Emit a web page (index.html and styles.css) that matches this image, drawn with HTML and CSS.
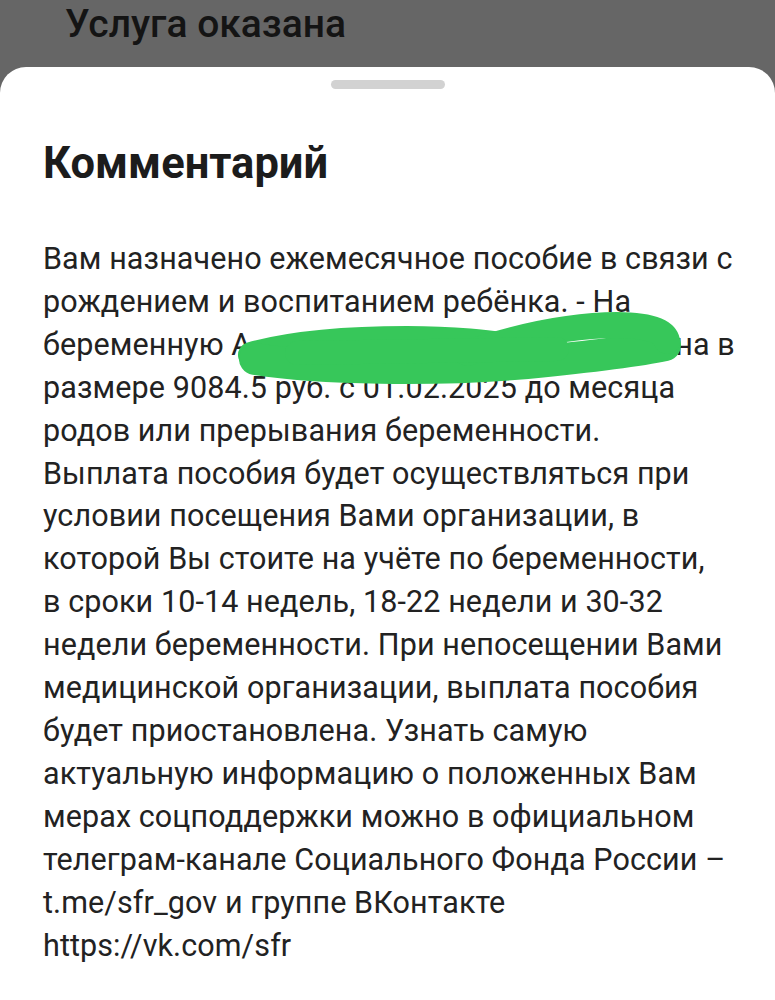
FILE: index.html
```html
<!DOCTYPE html>
<html lang="ru">
<head>
<meta charset="utf-8">
<link rel="stylesheet" href="styles.css">
</head>
<body>
<div class="screen">
  <div class="backdrop">
    <div class="back-title">Услуга оказана</div>
  </div>
  <div class="sheet">
    <div class="handle"></div>
    <h1 class="title">Комментарий</h1>
    <div class="text">
      <div class="line">Вам назначено ежемесячное пособие в связи с</div>
      <div class="line">рождением и воспитанием ребёнка. - На</div>
      <div class="line">беременную А<span class="name"></span>на в</div>
      <div class="line">размере 9084.5 руб. с 01.02.2025 до месяца</div>
      <div class="line">родов или прерывания беременности.</div>
      <div class="line">Выплата пособия будет осуществляться при</div>
      <div class="line">условии посещения Вами организации, в</div>
      <div class="line">которой Вы стоите на учёте по беременности,</div>
      <div class="line">в сроки 10-14 недель, 18-22 недели и 30-32</div>
      <div class="line">недели беременности. При непосещении Вами</div>
      <div class="line">медицинской организации, выплата пособия</div>
      <div class="line">будет приостановлена. Узнать самую</div>
      <div class="line">актуальную информацию о положенных Вам</div>
      <div class="line">мерах соцподдержки можно в официальном</div>
      <div class="line">телеграм-канале Социального Фонда России –</div>
      <div class="line">t.me/sfr_gov и группе ВКонтакте</div>
      <div class="line">https://vk.com/sfr</div>
    </div>
    <svg class="scribble" width="460" height="90" viewBox="0 0 460 90">
      <g fill="none" stroke="#37c75a" stroke-linecap="round" stroke-linejoin="round">
        <path stroke-width="26" d="M14,48 C50,38 100,32 170,32 C220,32 250,36 280,40"/>
        <path stroke-width="32" d="M18,52 C80,62 200,64 290,56 C350,50 400,44 428,38"/>
        <path stroke-width="26" d="M230,46 C280,30 330,18 380,18 C410,18 428,24 430,34"/>
        <path stroke-width="24" d="M60,46 L320,42"/>
      </g>
    </svg>
  </div>
</div>
</body>
</html>
```
FILE: styles.css
```css
* { box-sizing: border-box; }
html, body { margin: 0; padding: 0; }
body {
  width: 775px;
  height: 1000px;
  overflow: hidden;
  background: #666666;
  font-family: Roboto, "Noto Sans", sans-serif;
}
.screen {
  position: relative;
  width: 775px;
  height: 1000px;
  display: flex;
  flex-direction: column;
}
.backdrop {
  height: 67px;
  background: #666666;
  padding-left: 65px;
  flex-shrink: 0;
}
.back-title {
  font-size: 39px;
  font-weight: 500;
  color: #141414;
  line-height: 48px;
}
.sheet {
  position: relative;
  flex: 1;
  background: #ffffff;
  border-radius: 26px 26px 0 0;
  padding: 13px 43px 0 43px;
}
.handle {
  width: 114px;
  height: 9px;
  border-radius: 5px;
  background: #d2d2d2;
  margin: 0 auto;
}
.title {
  margin: 49px 0 0 0;
  font-size: 43.5px;
  font-weight: 700;
  color: #1c1c1c;
  line-height: 52px;
}
.text {
  margin-top: 48px;
  font-size: 30.5px;
  letter-spacing: 0.1px;
  color: #222222;
  line-height: 42.9px;
}
.line { white-space: nowrap; }
.name {
  display: inline-block;
  width: 424px;
  height: 1px;
}
.scribble {
  position: absolute;
  left: 237px;
  top: 240px;
}
```
